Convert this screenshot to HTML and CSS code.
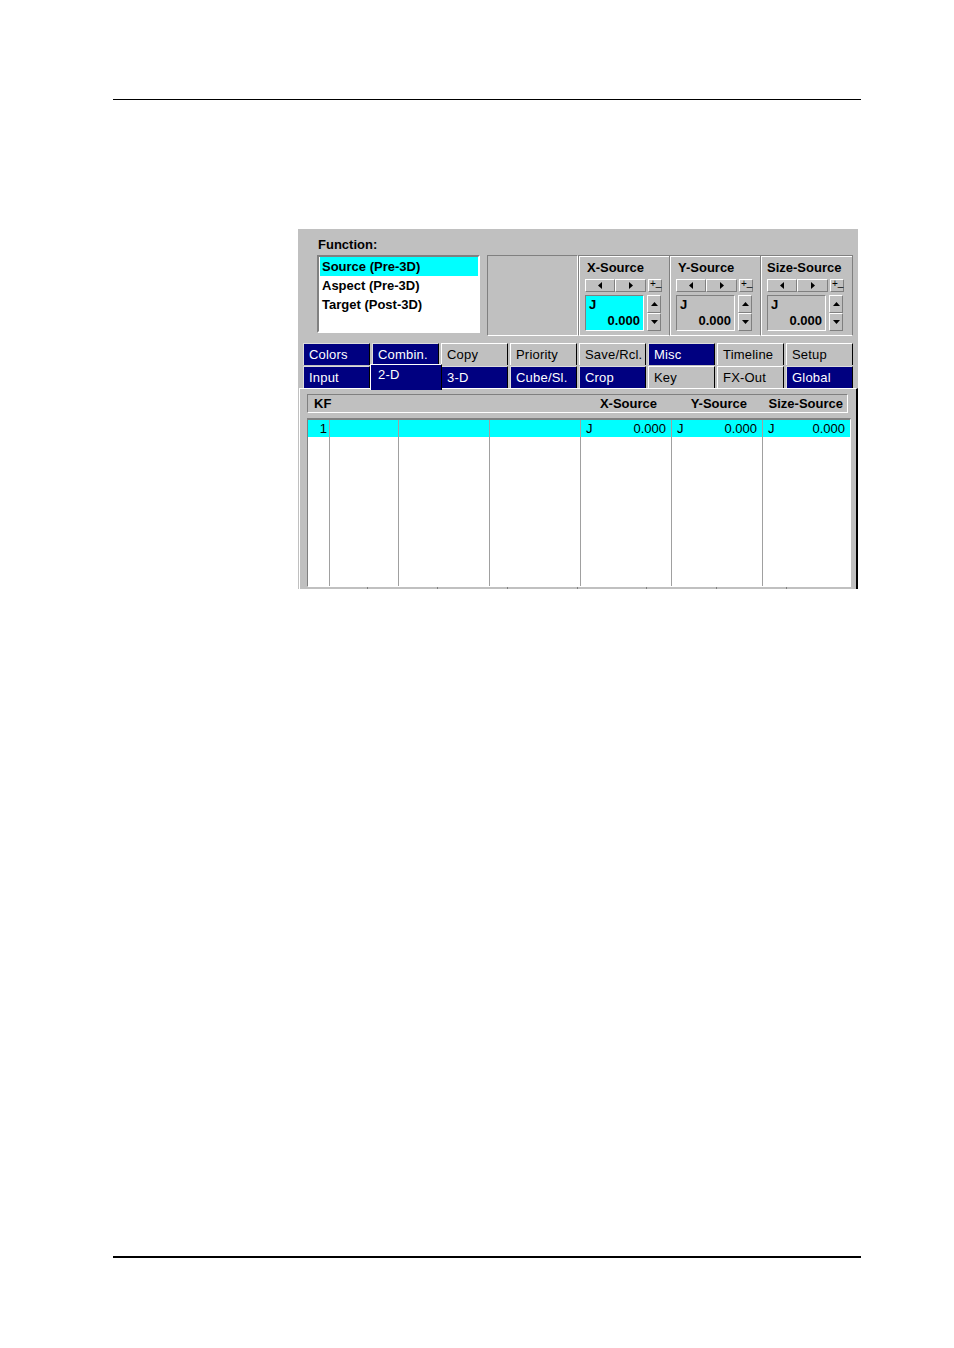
FILE: index.html
```html
<!DOCTYPE html>
<html>
<head>
<meta charset="utf-8">
<title>Function panel</title>
<link rel="stylesheet" href="styles.css">
</head>
<body>
<div class="page">
  <div class="rule rule-top"></div>

  <div class="panel">
    <div class="fn-label">Function:</div>

    <div class="top-row">
      <div class="listbox">
        <div class="item selected">Source (Pre-3D)</div>
        <div class="item">Aspect (Pre-3D)</div>
        <div class="item">Target (Post-3D)</div>
      </div>

      <div class="frame">
        <div class="blank"></div>

        <div class="group">
          <div class="g-title">X-Source</div>
          <div class="g-arrows">
            <div class="btn arr arr-l"><svg width="4" height="7" viewBox="0 0 4 7"><polygon points="4,0 0,3.5 4,7"/></svg></div>
            <div class="btn arr arr-r"><svg width="4" height="7" viewBox="0 0 4 7"><polygon points="0,0 4,3.5 0,7"/></svg></div>
            <div class="btn pm"><span class="plus">+</span><span class="minus">_</span></div>
          </div>
          <div class="g-value">
            <div class="valbox cyan"><span class="vj">J</span><span class="vn">0.000</span></div>
            <div class="spin">
              <div class="btn sp"><svg width="7" height="4" viewBox="0 0 7 4"><polygon points="0,4 3.5,0 7,4"/></svg></div>
              <div class="btn sp"><svg width="7" height="4" viewBox="0 0 7 4"><polygon points="0,0 7,0 3.5,4"/></svg></div>
            </div>
          </div>
        </div>

        <div class="group">
          <div class="g-title">Y-Source</div>
          <div class="g-arrows">
            <div class="btn arr arr-l"><svg width="4" height="7" viewBox="0 0 4 7"><polygon points="4,0 0,3.5 4,7"/></svg></div>
            <div class="btn arr arr-r"><svg width="4" height="7" viewBox="0 0 4 7"><polygon points="0,0 4,3.5 0,7"/></svg></div>
            <div class="btn pm"><span class="plus">+</span><span class="minus">_</span></div>
          </div>
          <div class="g-value">
            <div class="valbox"><span class="vj">J</span><span class="vn">0.000</span></div>
            <div class="spin">
              <div class="btn sp"><svg width="7" height="4" viewBox="0 0 7 4"><polygon points="0,4 3.5,0 7,4"/></svg></div>
              <div class="btn sp"><svg width="7" height="4" viewBox="0 0 7 4"><polygon points="0,0 7,0 3.5,4"/></svg></div>
            </div>
          </div>
        </div>

        <div class="group group-last">
          <div class="g-title">Size-Source</div>
          <div class="g-arrows">
            <div class="btn arr arr-l"><svg width="4" height="7" viewBox="0 0 4 7"><polygon points="4,0 0,3.5 4,7"/></svg></div>
            <div class="btn arr arr-r"><svg width="4" height="7" viewBox="0 0 4 7"><polygon points="0,0 4,3.5 0,7"/></svg></div>
            <div class="btn pm"><span class="plus">+</span><span class="minus">_</span></div>
          </div>
          <div class="g-value">
            <div class="valbox"><span class="vj">J</span><span class="vn">0.000</span></div>
            <div class="spin">
              <div class="btn sp"><svg width="7" height="4" viewBox="0 0 7 4"><polygon points="0,4 3.5,0 7,4"/></svg></div>
              <div class="btn sp"><svg width="7" height="4" viewBox="0 0 7 4"><polygon points="0,0 7,0 3.5,4"/></svg></div>
            </div>
          </div>
        </div>
      </div>
    </div>

    <div class="tabs">
      <div class="tab navy">Colors</div>
      <div class="tab navy">Combin.</div>
      <div class="tab">Copy</div>
      <div class="tab">Priority</div>
      <div class="tab">Save/Rcl.</div>
      <div class="tab navy">Misc</div>
      <div class="tab">Timeline</div>
      <div class="tab">Setup</div>

      <div class="tab navy">Input</div>
      <div class="tab navy active">2-D</div>
      <div class="tab navy">3-D</div>
      <div class="tab navy">Cube/Sl.</div>
      <div class="tab navy">Crop</div>
      <div class="tab">Key</div>
      <div class="tab">FX-Out</div>
      <div class="tab navy">Global</div>
    </div>

    <div class="content">
      <div class="thead">
        <div class="th th-kf">KF</div>
        <div class="th th-val">X-Source</div>
        <div class="th th-val">Y-Source</div>
        <div class="th th-val th-size">Size-Source</div>
      </div>
      <div class="tbody">
        <div class="td sel num">1</div>
        <div class="td sel"></div>
        <div class="td sel"></div>
        <div class="td sel"></div>
        <div class="td sel pair"><span>J</span><span>0.000</span></div>
        <div class="td sel pair"><span>J</span><span>0.000</span></div>
        <div class="td sel pair last"><span>J</span><span>0.000</span></div>

        <div class="td"></div>
        <div class="td"></div>
        <div class="td"></div>
        <div class="td"></div>
        <div class="td"></div>
        <div class="td"></div>
        <div class="td last"></div>
      </div>
      <div class="ticks">
        <span></span><span></span><span></span><span></span><span></span><span></span><span></span>
      </div>
    </div>
  </div>

  <div class="rule rule-bottom"></div>
</div>
</body>
</html>
```

FILE: styles.css
```css
* { box-sizing: border-box; }

html, body {
  margin: 0;
  padding: 0;
  background: #ffffff;
}

body {
  font-family: "Liberation Sans", Arial, sans-serif;
  font-size: 13px;
  color: #000;
}

.page {
  width: 954px;
  height: 1348px;
  padding-top: 99px;
}

.rule {
  margin-left: 113px;
  width: 748px;
  background: #000;
}

.rule-top { height: 1px; }

.rule-bottom {
  height: 2px;
  margin-top: 667px;
}

/* ---------- panel ---------- */
.panel {
  margin-top: 129px;
  margin-left: 298px;
  width: 560px;
  height: 360px;
  background: #c0c0c0;
  display: flex;
  flex-direction: column;
  overflow: hidden;
}

.fn-label {
  margin: 8px 0 0 20px;
  height: 16px;
  line-height: 16px;
  font-weight: bold;
  font-size: 13px;
}

.top-row {
  display: flex;
  margin: 2px 0 0 19px;
  height: 81px;
}

.listbox {
  width: 163px;
  height: 78px;
  background: #fff;
  border: 2px solid;
  border-color: #808080 #fff #fff #808080;
  padding-left: 1px;
}

.item {
  height: 19px;
  line-height: 19px;
  padding-left: 2px;
  font-weight: bold;
  white-space: nowrap;
}

.item.selected { background: #00ffff; }

.frame {
  display: flex;
  margin-left: 7px;
  height: 81px;
}

.blank {
  width: 91px;
  border: 1px solid;
  border-color: #808080 #fff #fff #808080;
}

.group {
  width: 91px;
  border-top: 1px solid #808080;
  border-left: 1px solid #808080;
  border-bottom: 1px solid #fff;
  box-shadow: inset 1px 1px 0 #fff;
  padding: 4px 0 0 6px;
}

.group-last {
  width: 93px;
  border-right: 1px solid #808080;
}

.g-title {
  height: 16px;
  line-height: 16px;
  padding-left: 2px;
  font-weight: bold;
  white-space: nowrap;
}

.group-last .g-title { padding-left: 0; }

.g-arrows {
  display: flex;
  margin-top: 3px;
  height: 13px;
}

.btn {
  background: #c0c0c0;
  border: 1px solid;
  border-color: #fff #808080 #808080 #fff;
  display: flex;
  align-items: center;
  justify-content: center;
}

.btn svg { display: block; fill: #000; }

.arr-l { width: 30px; }
.arr-r { width: 31px; }

.pm {
  width: 14px;
  margin-left: 2px;
  font-size: 10px;
  line-height: 10px;
  align-items: flex-start;
  justify-content: flex-start;
  padding-left: 1px;
}

.pm .plus { margin-top: -1px; }
.pm .minus { margin-top: -2px; }

.g-value {
  display: flex;
  margin-top: 3px;
  height: 36px;
}

.valbox {
  width: 59px;
  height: 36px;
  border: 1px solid;
  border-color: #808080 #fff #fff #808080;
  background: #c0c0c0;
  display: flex;
  flex-direction: column;
  padding: 2px 3px 0 3px;
  font-weight: bold;
}

.valbox.cyan { background: #00ffff; }

.vj { line-height: 14px; }
.vn {
  line-height: 16px;
  text-align: right;
  margin-top: 1px;
}

.spin {
  width: 14px;
  margin-left: 3px;
  display: flex;
  flex-direction: column;
}

.sp { height: 18px; }

/* ---------- tabs ---------- */
.tabs {
  display: grid;
  grid-template-columns: repeat(8, 67px);
  grid-template-rows: 22px 22px;
  column-gap: 2px;
  row-gap: 1px;
  margin: 7px 0 0 5px;
}

.tab {
  border-top: 1px solid #fff;
  border-left: 1px solid #fff;
  border-right: 1px solid #000;
  background: #c0c0c0;
  padding-left: 5px;
  line-height: 21px;
  letter-spacing: 0.2px;
  white-space: nowrap;
  color: #000;
}

.tab.navy {
  background: #000080;
  color: #fff;
  border-top-color: #dcdcdc;
  border-left-color: #dcdcdc;
}

.tab.active {
  position: relative;
  z-index: 1;
  margin: -2px -3px -2px -2px;
  padding-left: 7px;
  line-height: 20px;
  border-top-color: #fff;
  border-left-color: #fff;
}

/* ---------- content ---------- */
.content {
  flex: 1;
  margin-left: 1px;
  border-left: 1px solid #fff;
  border-top: 1px solid #fff;
  border-right: 2px solid #000;
  padding: 5px 0 0 7px;
}

.thead {
  width: 541px;
  height: 19px;
  border: 1px solid;
  border-color: #808080 #fff #fff #808080;
  display: flex;
  align-items: center;
  font-weight: bold;
  line-height: 17px;
}

.th-kf {
  flex: 1;
  padding-left: 6px;
}

.th-val {
  width: 90px;
  text-align: right;
  padding-right: 4px;
  white-space: nowrap;
}

.th-size { width: 96px; }

.tbody {
  margin-top: 5px;
  width: 544px;
  height: 169px;
  background: #fff;
  border-top: 2px solid #808080;
  border-left: 1px solid #808080;
  border-right: 1px solid #fff;
  border-bottom: 1px solid #fff;
  display: grid;
  grid-template-columns: 22px 69px 91px 91px 91px 91px 1fr;
  grid-template-rows: 17px 1fr;
}

.td {
  border-right: 1px solid #a0a0a0;
  line-height: 17px;
  white-space: nowrap;
}

.td.last { border-right: none; }

.td.sel { background: #00ffff; }

.td.num {
  text-align: right;
  padding-right: 2px;
}

.td.pair {
  display: flex;
  justify-content: space-between;
  padding: 0 5px;
}

.ticks {
  display: flex;
  margin-left: 60px;
  height: 2px;
}

.ticks span {
  width: 70px;
  height: 2px;
  border-left: 1px solid #808080;
}
```
